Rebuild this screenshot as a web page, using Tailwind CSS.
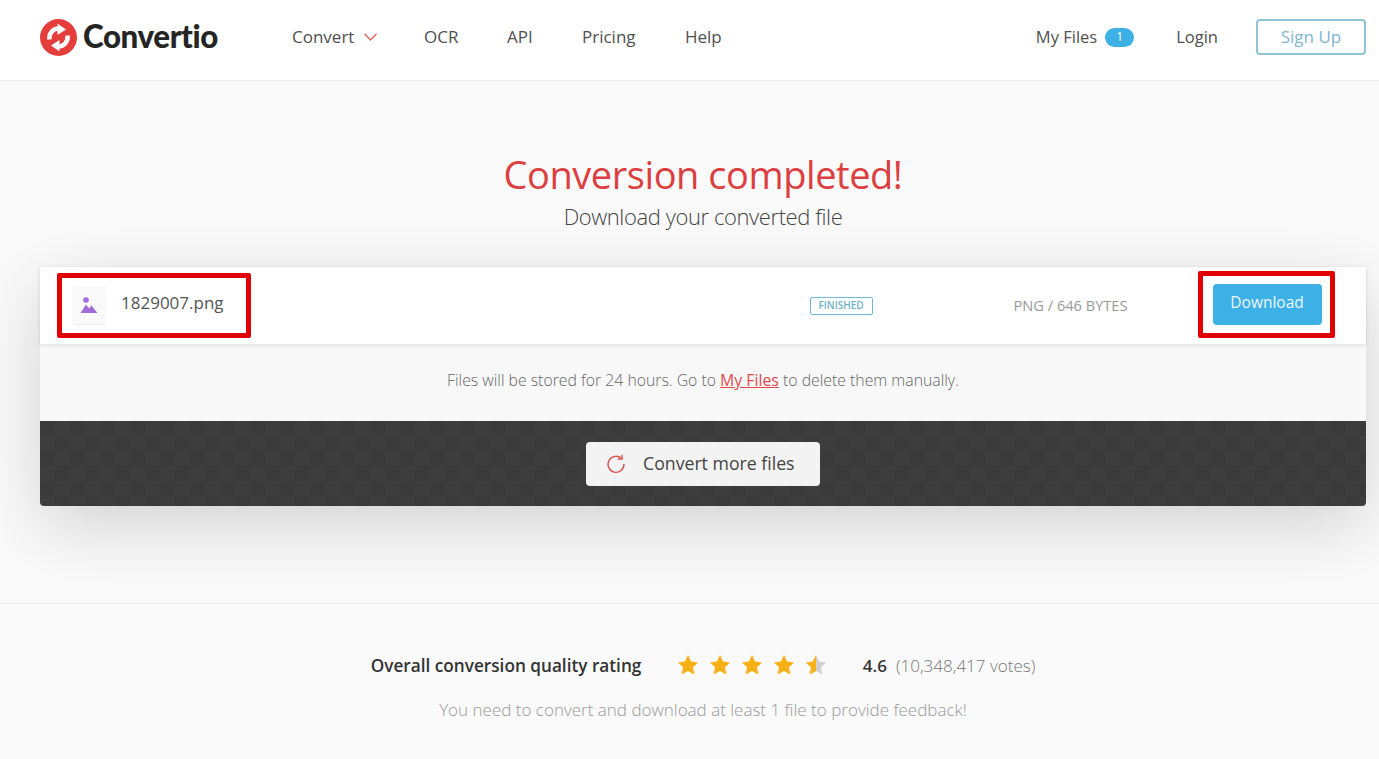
<!DOCTYPE html>
<html lang="en">
<head>
    <meta charset="UTF-8">
    <meta name="viewport" content="width=device-width, initial-scale=1.0">
    <title>Convertio</title>
    <script src="https://cdn.jsdelivr.net/npm/@tailwindcss/browser@4"></script>
</head>
<body class="bg-[#fafafa] font-['Open_Sans',sans-serif] text-[#4a4a4a] overflow-hidden">
    <!-- Header -->
    <header class="h-[81px] bg-white border-b border-[#e9e9e9] flex items-center pl-[40px] pr-[13px] pb-[6px]">
        <a class="flex items-center w-[252px] shrink-0">
            <svg class="w-[37px] h-[37px]" viewBox="0 0 37 37">
                <circle cx="18.5" cy="18.500" r="18.500" fill="#e53d3c"/>
                <path d="M9.500 20.500A9.500 9.500 0 0 1 18 9.500" fill="none" stroke="#fff" stroke-width="4.500"/>
                <path d="M17.500 4.500 26 10.500 17.500 16z" fill="#fff"/>
                <path d="M27.500 16.500A9.500 9.500 0 0 1 19 27.500" fill="none" stroke="#fff" stroke-width="4.500"/>
                <path d="M19.500 32.500 11 26.500 19.500 21z" fill="#fff"/>
            </svg>
            <span class="ml-[6px] text-[31.300px] leading-none font-black tracking-[-0.4px] text-[#252525] font-['Lato',sans-serif]">Convertio</span>
        </a>
        <nav class="flex items-center text-[17px] text-[#505050]">
            <a class="flex items-center w-[132px]">Convert
                <svg class="ml-[10px] w-[13px] h-[8px]" viewBox="0 0 13 8" fill="none" stroke="#e0615f" stroke-width="1.3"><path d="M0.5 0.7 6.5 7 12.500 0.7"/></svg>
            </a>
            <a class="w-[83px]">OCR</a>
            <a class="w-[75px]">API</a>
            <a class="w-[103px]">Pricing</a>
            <a>Help</a>
        </nav>
        <div class="ml-auto flex items-center text-[16.5px] text-[#505050]">
            <a>My Files</a>
            <span class="ml-[8px] w-[29px] h-[19px] rounded-full bg-[#3db0e6] text-white text-[12px] flex items-center justify-center">1</span>
            <a class="ml-[42px]">Login</a>
            <a class="ml-[38px] w-[110px] h-[36px] rounded-[4px] border-2 border-[#8fc3d6] text-[#7fb6d0] text-[17px] flex items-center justify-center">Sign Up</a>
        </div>
    </header>

    <!-- Result -->
    <main class="h-[523px] border-b border-[#e9e9e9] pt-[64px] pl-[40px] pr-[13px]">
        <h1 class="text-center text-[38px] leading-[58px] font-normal text-[#dd3f41] tracking-[-0.45px]">Conversion completed!</h1>
        <p class="text-center text-[22px] leading-[26px] pb-[2px] font-light text-[#444] tracking-[-0.4px]">Download your converted file</p>

        <section class="relative mt-[36px] rounded-b-[4px] shadow-[0_20px_70px_rgba(0,0,0,0.16)]">
            <div class="h-[77px] bg-white flex items-center shadow-[0_1px_4px_rgba(0,0,0,0.12)] relative">
                <div class="ml-[32px] w-[34px] h-[38px] -translate-y-[1px] bg-[#f9f9f9] rounded-[3px] flex items-center justify-center shadow-[0_1px_1px_rgba(0,0,0,0.08)]">
                    <svg class="w-[18px] h-[18px]" viewBox="0 0 18 18" fill="#a06bdb">
                        <circle cx="6" cy="4" r="2.8"/>
                        <path d="M0.500 17 6 8.500 9 12.500 11.500 9.500 17.500 17z"/>
                    </svg>
                </div>
                <span class="ml-[15px] text-[17px] text-[#555] -translate-y-[3px]">1829007.png</span>
                <span class="ml-[586px] w-[63px] h-[18px] rounded-[2px] border border-[#6db8d4] text-[#6db0c9] text-[10px] font-semibold flex items-center justify-center">FINISHED</span>
                <span class="ml-[141px] w-[199px] text-[14.6px] text-[#999]">PNG / 646 BYTES</span>
                <a class="w-[109px] h-[41px] rounded-[4px] bg-[#3db0e6] text-white/90 text-[15.5px] font-medium flex items-center justify-center pb-[3px] -translate-y-[1px]">Download</a>
            </div>
            <div class="h-[77px] bg-[#f8f8f8] flex items-center justify-center pb-[4px] text-[15.8px] font-light text-[#666]">
                <p>Files will be stored for 24 hours. Go to <a class="text-[#e5484a] font-normal underline">My Files</a> to delete them manually.</p>
            </div>
            <div class="h-[85px] rounded-b-[4px] bg-[#3b3b3b] bg-[conic-gradient(#3d3d3d_25%,#3a3a3a_0_50%,#3d3d3d_0_75%,#3a3a3a_0)] bg-size-[30px_30px] flex items-center justify-center">
                <a class="w-[234px] h-[44px] rounded-[4px] bg-[#f3f3f3] flex items-center text-[17.7px] font-medium text-[#444]">
                    <svg class="ml-[20px] w-[20px] h-[20px]" viewBox="0 0 20 20" fill="none" stroke="#d9534f" stroke-width="1.4">
                        <path d="M15.500 4.500A8 8 0 1 0 18 10"/>
                        <path d="M16 0.800V5H11.800"/>
                    </svg>
                    <span class="ml-[17px]">Convert more files</span>
                </a>
            </div>

            <!-- Red annotations over the screenshot -->
            <div class="absolute left-[17px] top-[6px] w-[194px] h-[65px] border-[5px] border-[#e00000] rounded-[2px]"></div>
            <div class="absolute left-[1158px] top-[4px] w-[137px] h-[67px] border-[5px] border-[#e00000] rounded-[2px]"></div>
        </section>
    </main>

    <!-- Rating -->
    <footer class="pt-[48px] pl-[40px] pr-[13px] flex flex-col items-center">
        <div class="flex items-center h-[28px]">
            <span class="text-[17.2px] font-semibold text-[#333]">Overall conversion quality rating</span>
            <div class="ml-[36px] flex gap-[10px] -translate-y-[1px]">
                <svg class="w-[22px] h-[22px]" viewBox="0 0 24 24" fill="#fbb016"><path d="M12 1l3.400 7.200 7.600 1-5.600 5.300 1.500 7.800L12 18.500l-6.900 3.800 1.500-7.800L1 9.200l7.600-1z"/></svg>
                <svg class="w-[22px] h-[22px]" viewBox="0 0 24 24" fill="#fbb016"><path d="M12 1l3.400 7.200 7.600 1-5.600 5.300 1.500 7.800L12 18.500l-6.900 3.800 1.500-7.800L1 9.200l7.600-1z"/></svg>
                <svg class="w-[22px] h-[22px]" viewBox="0 0 24 24" fill="#fbb016"><path d="M12 1l3.400 7.200 7.600 1-5.600 5.300 1.500 7.800L12 18.500l-6.900 3.800 1.500-7.800L1 9.200l7.600-1z"/></svg>
                <svg class="w-[22px] h-[22px]" viewBox="0 0 24 24" fill="#fbb016"><path d="M12 1l3.400 7.200 7.600 1-5.600 5.300 1.500 7.800L12 18.500l-6.900 3.800 1.500-7.800L1 9.200l7.600-1z"/></svg>
                <svg class="w-[22px] h-[22px]" viewBox="0 0 24 24">
                    <path d="M12 1l3.400 7.200 7.600 1-5.600 5.300 1.500 7.800L12 18.500l-6.900 3.800 1.500-7.800L1 9.200l7.600-1z" fill="#cfcfcf"/>
                    <path d="M12 1v17.500l-6.900 3.800 1.500-7.800L1 9.200l7.600-1z" fill="#fbb016"/>
                </svg>
            </div>
            <span class="ml-[35.500px] text-[17px] font-semibold text-[#333]">4.6</span>
            <span class="ml-[9px] text-[17px] font-light text-[#777]">(10,348,417 votes)</span>
        </div>
        <p class="mt-[17px] text-[17px] font-light text-[#999]">You need to convert and download at least 1 file to provide feedback!</p>
    </footer>
</body>
</html>
